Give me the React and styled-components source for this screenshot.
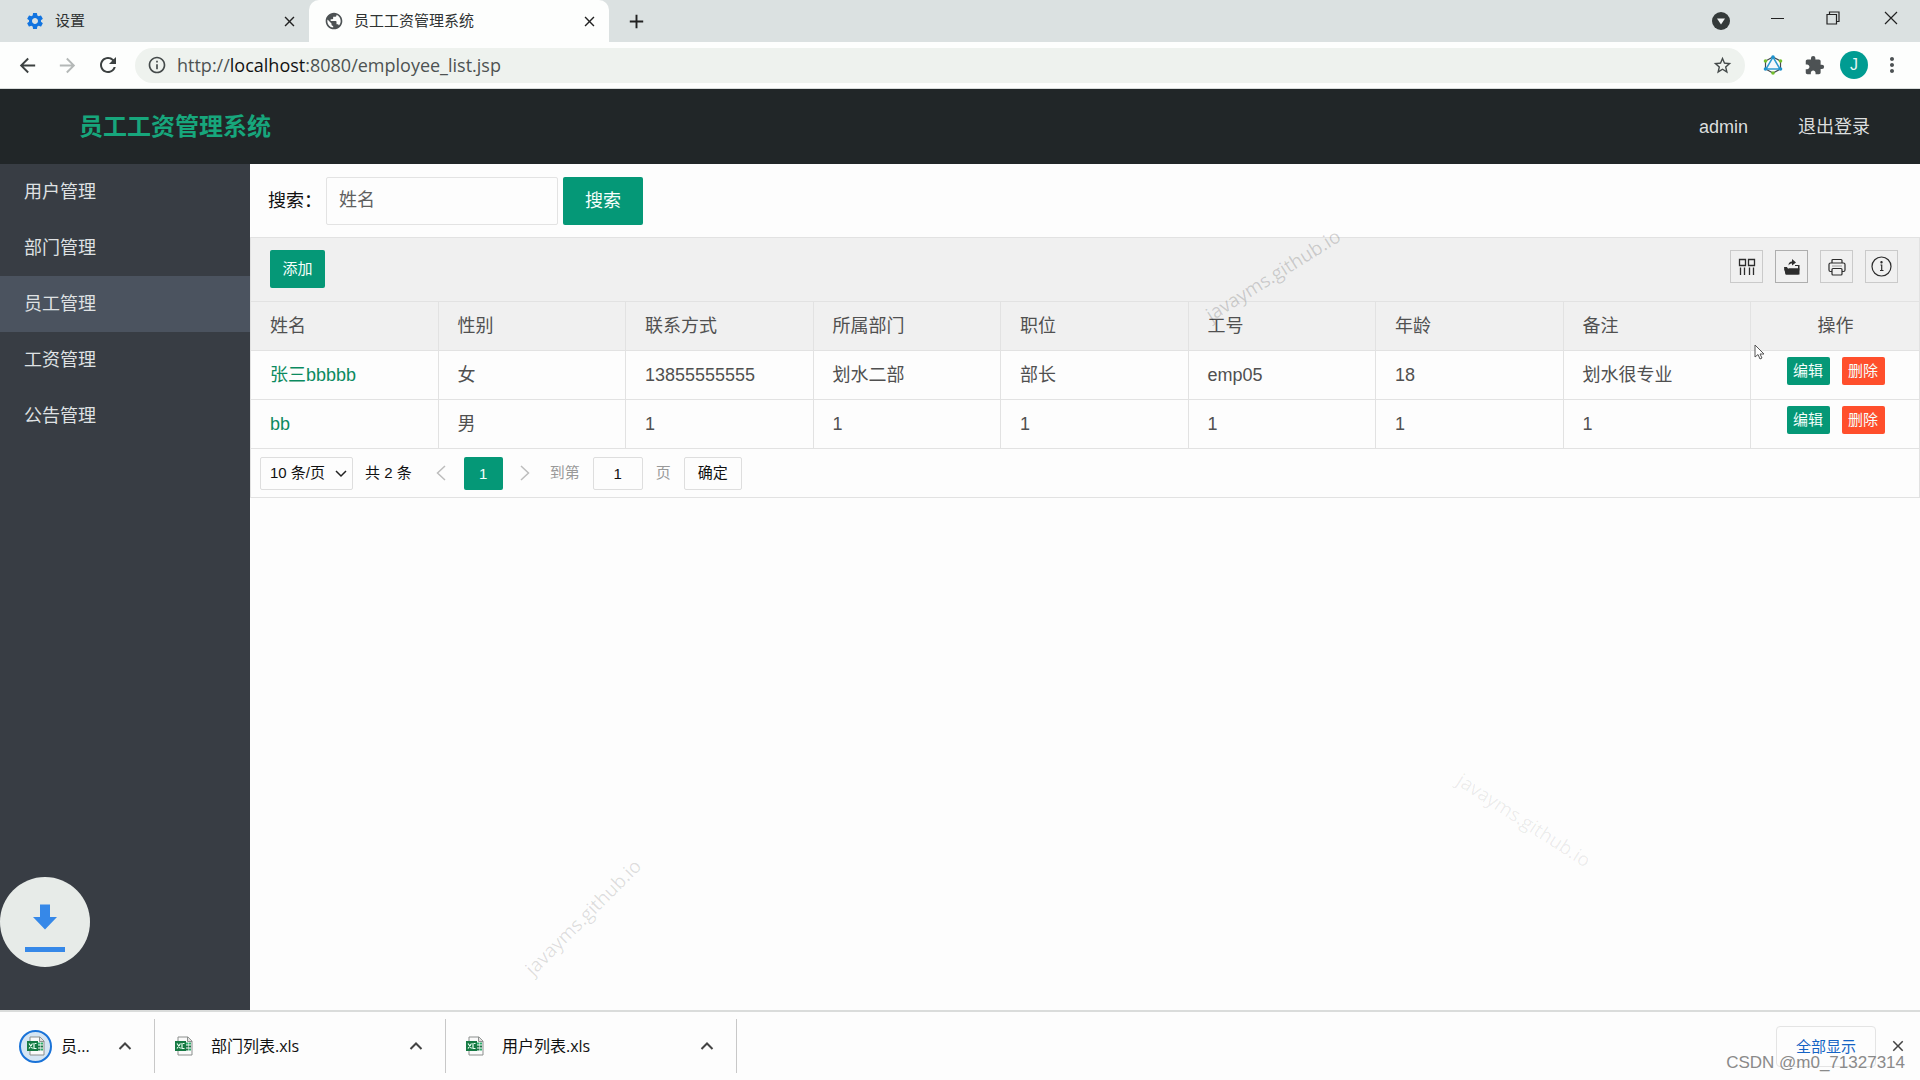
import styled, { createGlobalStyle, css } from "styled-components";
import {
  MdAdd,
  MdArrowBack,
  MdArrowForward,
  MdClose,
  MdExtension,
  MdInfoOutline,
  MdMoreVert,
  MdPublic,
  MdRefresh,
  MdSettings,
  MdStarBorder,
} from "react-icons/md";

const GlobalStyle = createGlobalStyle`
  * {
    box-sizing: border-box;
  }

  body {
    margin: 0;
    background: #fdfdfd;
    color: #111;
    font-family: "Liberation Sans", "Noto Sans CJK SC", sans-serif;
    font-size: 18px;
    line-height: 24px;
  }

  button, input, select {
    font-family: inherit;
    line-height: inherit;
    margin: 0;
    padding: 0;
  }

  a {
    text-decoration: none;
  }

  svg {
    display: block;
    flex-shrink: 0;
  }
`;

const Screen = styled.div`
  position: relative;
  display: flex;
  flex-direction: column;
  min-height: 100vh;
  overflow: hidden;
`;

/* ---------- browser chrome ---------- */

const TabStrip = styled.div`
  display: flex;
  justify-content: space-between;
  height: 42px;
  background: #dbe1e1;
`;

const Tabs = styled.div`
  display: flex;
  align-items: stretch;
`;

const Tab = styled.div`
  display: flex;
  align-items: center;
  width: ${({ $active }) => ($active ? 300 : 309)}px;
  padding: 0 10px 0 ${({ $active }) => ($active ? 15 : 25)}px;
  gap: 10px;
  border-radius: 10px 10px 0 0;
  background: ${({ $active }) => ($active ? "#fdfefd" : "transparent")};
  color: #2f3333;
  font-size: 15px;
`;

const TabTitle = styled.span`
  flex: 1;
`;

const IconButton = styled.button`
  display: flex;
  align-items: center;
  justify-content: center;
  width: ${({ $w }) => $w || 20}px;
  height: ${({ $h }) => $h || 20}px;
  border: 0;
  background: none;
  color: ${({ $color }) => $color || "#222"};
`;

const NewTab = styled(IconButton)`
  align-self: center;
  margin-left: 17px;
`;

const WindowControls = styled.div`
  display: flex;
  align-items: flex-start;
`;

const AddressBar = styled.div`
  display: flex;
  align-items: center;
  height: 47px;
  padding: 0 9px 0 7px;
  background: #fdfefd;
  border-bottom: 1px solid #d8dcdb;
`;

const Omnibox = styled.div`
  display: flex;
  align-items: center;
  flex: 1;
  height: 35px;
  margin: 0 7px;
  padding: 0 12px;
  gap: 10px;
  border-radius: 18px;
  background: #eef2ee;
  color: #444a4a;
`;

const UrlText = styled.div`
  flex: 1;
  color: #4d5252;
  font-family: "Open Sans", "Noto Sans", sans-serif;
  font-size: 18px;

  b {
    color: #111;
    font-weight: 400;
  }
`;

const Avatar = styled.span`
  display: flex;
  align-items: center;
  justify-content: center;
  width: 28px;
  height: 28px;
  border-radius: 50%;
  background: #009c92;
  color: #e8f6f5;
  font-size: 16px;
`;

/* ---------- page ---------- */

const Header = styled.header`
  display: flex;
  align-items: center;
  justify-content: space-between;
  height: 75px;
  padding: 0 50px 0 79px;
  background: #212628;
`;

const Brand = styled.h1`
  margin: 0;
  color: #17a67c;
  font-size: 24px;
  font-weight: 700;
`;

const HeaderNav = styled.nav`
  display: flex;
  gap: 50px;

  a {
    color: #dcdede;
    font-size: 18px;
  }
`;

const Body = styled.div`
  display: flex;
  flex: 1;
`;

const Sidebar = styled.nav`
  width: 250px;
  background: #383d44;
`;

const SideLink = styled.a`
  display: flex;
  align-items: center;
  height: 56px;
  padding: 0 24px;
  color: #dfe1e3;
  background: ${({ $active }) => ($active ? "#4b535f" : "transparent")};
`;

const Main = styled.main`
  flex: 1;
  min-width: 0;
`;

const SearchForm = styled.form`
  display: flex;
  align-items: center;
  height: 73px;
  padding-left: 18px;

  label {
    width: 58px;
  }
`;

const SearchInput = styled.input`
  width: 232px;
  height: 48px;
  margin-right: 5px;
  padding: 0 12px;
  border: 1px solid #e3e3e3;
  border-radius: 2px;
  background: #fdfdfd;
  font-size: 18px;

  &::placeholder {
    color: #5f5f5f;
    opacity: 1;
  }
`;

const sizes = {
  large: css`
    width: 80px;
    height: 48px;
    font-size: 18px;
  `,
  small: css`
    width: 55px;
    height: 38px;
    font-size: 15px;
  `,
  mini: css`
    width: 43px;
    height: 28px;
    font-size: 15px;
  `,
};

const Button = styled.button`
  border: 0;
  border-radius: 2px;
  background: ${({ $danger }) => ($danger ? "#ff4f2c" : "#059877")};
  color: #f6fffc;
  ${({ $size }) => sizes[$size]}
`;

const TableBox = styled.section`
  border: 1px solid #e2e2e2;
`;

const Toolbar = styled.div`
  display: flex;
  align-items: flex-start;
  justify-content: space-between;
  height: 64px;
  padding: 12px 21px 0 19px;
  border-bottom: 1px solid #e2e2e2;
  background: #f0f0f0;
`;

const Tools = styled.div`
  display: flex;
  gap: 12px;
`;

const Tool = styled.button`
  display: flex;
  align-items: center;
  justify-content: center;
  width: 33px;
  height: 33px;
  border: 1px solid ${({ $strong }) => ($strong ? "#aeaeae" : "#cacaca")};
  background: transparent;
  color: #2c2c2c;
`;

const Table = styled.table`
  width: 100%;
  table-layout: fixed;
  border-spacing: 0;

  th, td {
    height: 49px;
    padding: 0 18px 0 19px;
    border-right: 1px solid #e2e2e2;
    border-bottom: 1px solid #e2e2e2;
    color: #505050;
    font-weight: 400;
    text-align: left;
    white-space: nowrap;
  }

  th {
    background: #f0f0f0;
  }

  th:last-child, td:last-child {
    border-right: 0;
    text-align: center;
  }

  th:last-child {
    width: 168px;
  }

  td a {
    color: #0b8a60;
  }
`;

const RowActions = styled.div`
  display: flex;
  justify-content: center;
  gap: 12px;
  height: 36px;
`;

const Pager = styled.div`
  display: flex;
  align-items: center;
  height: 48px;
  padding-left: 9px;
  font-size: 15px;
`;

const PageSize = styled.div`
  position: relative;
  width: 93px;
  margin-right: 12px;

  select {
    width: 100%;
    height: 33px;
    padding-left: 9px;
    border: 1px solid #dedede;
    border-radius: 2px;
    background: #fdfdfd;
    color: #111;
    font-size: 15px;
    appearance: none;
  }

  svg {
    position: absolute;
    top: 12px;
    right: 6px;
    pointer-events: none;
  }
`;

const PageStep = styled.button`
  display: flex;
  align-items: center;
  justify-content: center;
  width: 45px;
  height: 33px;
  border: 0;
  background: none;
`;

const PageCurrent = styled.span`
  width: 39px;
  border-radius: 2px;
  background: #059877;
  color: #f6fffc;
  line-height: 33px;
  text-align: center;
`;

const Total = styled.span`
  margin-right: 7px;
`;

const Jump = styled.label`
  display: flex;
  align-items: center;
  gap: 13px;
  margin: 0 13px 0 2px;
  color: #999;

  input {
    width: 50px;
    height: 33px;
    border: 1px solid #dedede;
    border-radius: 2px;
    background: #fdfdfd;
    color: #111;
    font-size: 15px;
    text-align: center;
  }
`;

const Confirm = styled.button`
  width: 58px;
  height: 33px;
  border: 1px solid #dedede;
  border-radius: 2px;
  background: #fdfdfd;
  color: #111;
  font-size: 15px;
`;

/* ---------- downloads shelf ---------- */

const Shelf = styled.footer`
  display: flex;
  align-items: center;
  height: 70px;
  padding-right: 12px;
  border-top: 2px solid #dadcdb;
  background: #fdfdfd;
  font-family: "Open Sans", "Noto Sans CJK SC", sans-serif;
  font-size: 16px;
`;

const Download = styled.div`
  display: flex;
  align-items: center;
  width: ${({ $active }) => ($active ? 155 : 291)}px;
  height: 54px;
  padding: 0 19px 0 ${({ $active }) => ($active ? 19 : 20)}px;
  border-right: 1px solid #c8c8c8;

  > span {
    flex: 1;
    margin-left: ${({ $active }) => ($active ? 9 : 18)}px;
    white-space: nowrap;
  }
`;

const Ring = styled.div`
  display: flex;
  align-items: center;
  justify-content: center;
  width: 33px;
  height: 33px;
  border: 2px solid #1a73d8;
  border-radius: 50%;
  background: #d5e5f3;
`;

const ShowAll = styled.button`
  width: 100px;
  height: 41px;
  margin: 0 12px 0 auto;
  border: 1px solid #e4e4e4;
  border-radius: 4px;
  background: #fdfdfd;
  color: #1463c4;
  font-size: 15px;
`;

/* ---------- things that float over the page ---------- */

const DownloadBadge = styled.div`
  position: absolute;
  left: 0;
  bottom: 113px;
`;

const Pointer = styled.div`
  position: absolute;
  top: 344px;
  right: 155px;
`;

const Watermark = styled.span`
  position: absolute;
  left: ${({ $x }) => $x}px;
  top: ${({ $y }) => $y}px;
  transform: translate(-50%, -50%) rotate(${({ $angle }) => $angle}deg);
  color: rgba(0, 0, 0, ${({ $alpha }) => $alpha});
  font-family: "Open Sans", "Noto Sans", sans-serif;
  font-size: 19px;
  line-height: 26px;
  pointer-events: none;
`;

const Credit = styled.span`
  position: absolute;
  right: 15px;
  bottom: 5px;
  color: #8a8a8a;
  font-size: 17px;
  pointer-events: none;
`;

const Caret = () => (
  <svg width="14" height="14" viewBox="0 0 14 14" fill="none" stroke="#444" strokeWidth="2">
    <path d="M1.5 10L7 4.5 12.5 10" />
  </svg>
);

const Chevron = ({ next }) => (
  <svg width="10" height="16" viewBox="0 0 10 16" fill="none" stroke="#bdbdbd" strokeWidth="1.5">
    <path d={next ? "M1 1L8.500 8 1 15" : "M9 1L1.500 8 9 15"} />
  </svg>
);

const SheetIcon = () => (
  <svg width="18" height="20" viewBox="0 0 18 20">
    <path d="M3 1h10l4 4v14H3z" fill="#fafafa" stroke="#8b8f8d" />
    <path d="M12.500 1v4.500H17" fill="#ddd" stroke="#8b8f8d" />
    <path d="M11 6.500h2.500v2H11zM14 6.500h2v2h-2zM14 12.500h2v2h-2z" fill="#2fae6c" />
    <path d="M11 9.500h2.500v2H11zM14 9.500h2v2h-2zM11 12.500h2.500v2H11z" fill="#1d7547" />
    <path d="M0 5h11v10H0z" fill="#167a44" />
    <path d="M2 7.500l3.500 5M5.500 7.500l-3.500 5M7 7v5.500h2.500M9.500 7.500H8" stroke="#eafff2" strokeWidth="1.200" fill="none" />
  </svg>
);

const HexIcon = () => (
  <svg width="20" height="20" viewBox="0 0 20 20">
    <path d="M10 2l7.500 4v8L10 18l-7.500-4V6z" fill="none" stroke="#444c50" strokeWidth="1.200" />
    <path d="M10 2l7 12H3z" fill="#f4f9fc" stroke="#2d9bd0" strokeWidth="1.500" />
    <g fill="#1d93cf">
      <circle cx="10" cy="2" r="1.800" />
      <circle cx="2.500" cy="14" r="1.800" />
      <circle cx="17.500" cy="14" r="1.800" />
    </g>
    <g fill="#74bf2d">
      <circle cx="2.500" cy="6" r="1.800" />
      <circle cx="17.500" cy="6" r="1.800" />
      <circle cx="10" cy="18" r="1.800" />
    </g>
  </svg>
);

const ColumnsIcon = () => (
  <svg width="18" height="18" viewBox="0 0 18 18" fill="none" stroke="currentColor" strokeWidth="1.300">
    <path d="M1.500 1.500h6v6h-6zM10.500 1.500h6v6h-6zM2.500 9.500V17M6.500 9.500V17M11.500 9.500V17M15.500 9.500V17" />
  </svg>
);

const ExportIcon = () => (
  <svg width="18" height="18" viewBox="0 0 18 18">
    <path d="M1 9h3l1 2h8V7h3.500v9.500H2.500z" fill="currentColor" />
    <path d="M12 7.500h3.500V11H6" fill="#f0f0f0" stroke="currentColor" />
    <path d="M1 10.500h15.500l-1 6H3z" fill="currentColor" />
    <path d="M5.500 7.500C5.500 4.500 7 3.500 9 3.500V1l4 3.500-4 3V5.500C7.500 5.500 6.500 6 5.500 7.500z" fill="currentColor" />
  </svg>
);

const PrintIcon = () => (
  <svg width="18" height="18" viewBox="0 0 18 18" fill="none" stroke="currentColor" strokeWidth="1.200">
    <path d="M4 5V2.500Q4 1.500 5 1.500h8q1 0 1 1V5" />
    <rect x="1" y="5" width="16" height="8.500" rx="1.500" />
    <rect x="4" y="10.500" width="10" height="6.500" rx="1" fill="#f0f0f0" />
    <path d="M4 8h10" stroke="#aaa" />
  </svg>
);

const InfoIcon = () => (
  <svg width="21" height="21" viewBox="0 0 21 21" fill="none" stroke="currentColor" strokeWidth="1.200">
    <circle cx="10.500" cy="10.500" r="9.500" />
    <path d="M9.500 9h1.200v5.500M9 14.500h3.500" />
    <circle cx="10.500" cy="6.200" r="0.600" fill="currentColor" />
  </svg>
);

const menu = ["用户管理", "部门管理", "员工管理", "工资管理", "公告管理"];
const columns = ["姓名", "性别", "联系方式", "所属部门", "职位", "工号", "年龄", "备注", "操作"];
const employees = [
  ["张三bbbbb", "女", "13855555555", "划水二部", "部长", "emp05", "18", "划水很专业"],
  ["bb", "男", "1", "1", "1", "1", "1", "1"],
];

function BrowserChrome() {
  return (
    <>
      <TabStrip>
        <Tabs>
          <Tab>
            <MdSettings size={20} color="#1274e0" />
            <TabTitle>设置</TabTitle>
            <IconButton aria-label="关闭标签页"><MdClose size={17} /></IconButton>
          </Tab>
          <Tab $active>
            <MdPublic size={20} color="#4d5254" />
            <TabTitle>员工工资管理系统</TabTitle>
            <IconButton aria-label="关闭标签页"><MdClose size={17} /></IconButton>
          </Tab>
          <NewTab aria-label="新标签页"><MdAdd size={23} /></NewTab>
        </Tabs>
        <WindowControls>
          <IconButton $w={56} $h={42} aria-label="搜索标签页">
            <svg width="18" height="18" viewBox="0 0 18 18">
              <circle cx="9" cy="9" r="9" fill="#343a3a" />
              <path d="M5 6.500h8l-4 6z" fill="#f1f4f4" />
            </svg>
          </IconButton>
          <IconButton $w={56} $h={36} aria-label="最小化">
            <svg width="13" height="13" viewBox="0 0 13 13" stroke="currentColor">
              <path d="M0 6.500h13" />
            </svg>
          </IconButton>
          <IconButton $w={56} $h={36} aria-label="还原">
            <svg width="14" height="14" viewBox="0 0 14 14" fill="none" stroke="currentColor" strokeWidth="1.200">
              <path d="M1 3.500h9.500V13H1zM3.500 3.500V1H13v9.500h-2.500" />
            </svg>
          </IconButton>
          <IconButton $w={59} $h={36} aria-label="关闭">
            <svg width="14" height="14" viewBox="0 0 14 14" stroke="currentColor" strokeWidth="1.200">
              <path d="M1 1l12 12M13 1L1 13" />
            </svg>
          </IconButton>
        </WindowControls>
      </TabStrip>
      <AddressBar>
        <IconButton $w={40} $h={34} $color="#3c4141" aria-label="后退"><MdArrowBack size={23} /></IconButton>
        <IconButton $w={40} $h={34} $color="#b4b8b7" aria-label="前进"><MdArrowForward size={23} /></IconButton>
        <IconButton $w={41} $h={34} $color="#3c4141" aria-label="刷新"><MdRefresh size={24} /></IconButton>
        <Omnibox>
          <MdInfoOutline size={20} />
          <UrlText>http://<b>localhost</b>:8080/employee_list.jsp</UrlText>
          <MdStarBorder size={21} />
        </Omnibox>
        <IconButton $w={42} $h={34} aria-label="扩展程序图标"><HexIcon /></IconButton>
        <IconButton $w={41} $h={34} $color="#4d5254" aria-label="扩展程序"><MdExtension size={21} /></IconButton>
        <IconButton $w={38} $h={34} aria-label="用户"><Avatar>J</Avatar></IconButton>
        <IconButton $w={38} $h={34} $color="#4d5254" aria-label="菜单"><MdMoreVert size={24} /></IconButton>
      </AddressBar>
    </>
  );
}

function EmployeeTable() {
  return (
    <TableBox>
      <Toolbar>
        <Button $size="small">添加</Button>
        <Tools>
          <Tool aria-label="筛选列"><ColumnsIcon /></Tool>
          <Tool $strong aria-label="导出"><ExportIcon /></Tool>
          <Tool aria-label="打印"><PrintIcon /></Tool>
          <Tool aria-label="提示"><InfoIcon /></Tool>
        </Tools>
      </Toolbar>
      <Table>
        <thead>
          <tr>{columns.map((name) => <th key={name}>{name}</th>)}</tr>
        </thead>
        <tbody>
          {employees.map((row) => (
            <tr key={row[0]}>
              {row.map((value, index) => (
                <td key={index}>{index === 0 ? <a href="#detail">{value}</a> : value}</td>
              ))}
              <td>
                <RowActions>
                  <Button $size="mini">编辑</Button>
                  <Button $size="mini" $danger>删除</Button>
                </RowActions>
              </td>
            </tr>
          ))}
        </tbody>
      </Table>
      <Pager>
        <PageSize>
          <select aria-label="每页条数" defaultValue="10">
            <option value="10">10 条/页</option>
            <option value="20">20 条/页</option>
          </select>
          <svg width="12" height="9" viewBox="0 0 12 9" fill="none" stroke="#222" strokeWidth="1.500">
            <path d="M1 2l5 5 5-5" />
          </svg>
        </PageSize>
        <Total>共 2 条</Total>
        <PageStep aria-label="上一页"><Chevron /></PageStep>
        <PageCurrent>1</PageCurrent>
        <PageStep aria-label="下一页"><Chevron next /></PageStep>
        <Jump>
          到第
          <input type="text" defaultValue="1" />
          页
        </Jump>
        <Confirm>确定</Confirm>
      </Pager>
    </TableBox>
  );
}

export default function App() {
  return (
    <Screen>
      <GlobalStyle />
      <BrowserChrome />
      <Header>
        <Brand>员工工资管理系统</Brand>
        <HeaderNav>
          <a href="#admin">admin</a>
          <a href="#logout">退出登录</a>
        </HeaderNav>
      </Header>
      <Body>
        <Sidebar>
          {menu.map((item) => (
            <SideLink key={item} href="#menu" $active={item === "员工管理"}>{item}</SideLink>
          ))}
        </Sidebar>
        <Main>
          <SearchForm onSubmit={(e) => e.preventDefault()}>
            <label htmlFor="keyword">搜索：</label>
            <SearchInput id="keyword" type="text" placeholder="姓名" />
            <Button $size="large">搜索</Button>
          </SearchForm>
          <EmployeeTable />
        </Main>
      </Body>
      <Shelf>
        <Download $active>
          <Ring><SheetIcon /></Ring>
          <span>员...</span>
          <IconButton aria-label="更多"><Caret /></IconButton>
        </Download>
        <Download>
          <SheetIcon />
          <span>部门列表.xls</span>
          <IconButton aria-label="更多"><Caret /></IconButton>
        </Download>
        <Download>
          <SheetIcon />
          <span>用户列表.xls</span>
          <IconButton aria-label="更多"><Caret /></IconButton>
        </Download>
        <ShowAll>全部显示</ShowAll>
        <IconButton $color="#444" aria-label="关闭下载栏"><MdClose size={18} /></IconButton>
      </Shelf>
      <DownloadBadge>
        <svg width="90" height="90" viewBox="0 0 90 90">
          <circle cx="45" cy="45" r="45" fill="#e7ebe8" />
          <path d="M40 27.500h10V40h7L45 52.500 33 40h7z" fill="#3688e8" />
          <path d="M25 70h40v5H25z" fill="#3688e8" />
        </svg>
      </DownloadBadge>
      <Pointer>
        <svg width="11" height="16" viewBox="0 0 11 16">
          <path d="M1 1v12l3-2.500 2 4.500 2-1-2-4h4z" fill="#fff" stroke="#555" />
        </svg>
      </Pointer>
      <Watermark $x={1273} $y={275} $angle={-32} $alpha={0.17}>javayms.github.io</Watermark>
      <Watermark $x={583} $y={917} $angle={-45} $alpha={0.13}>javayms.github.io</Watermark>
      <Watermark $x={1524} $y={820} $angle={33} $alpha={0.08}>javayms.github.io</Watermark>
      <Credit>CSDN @m0_71327314</Credit>
    </Screen>
  );
}
